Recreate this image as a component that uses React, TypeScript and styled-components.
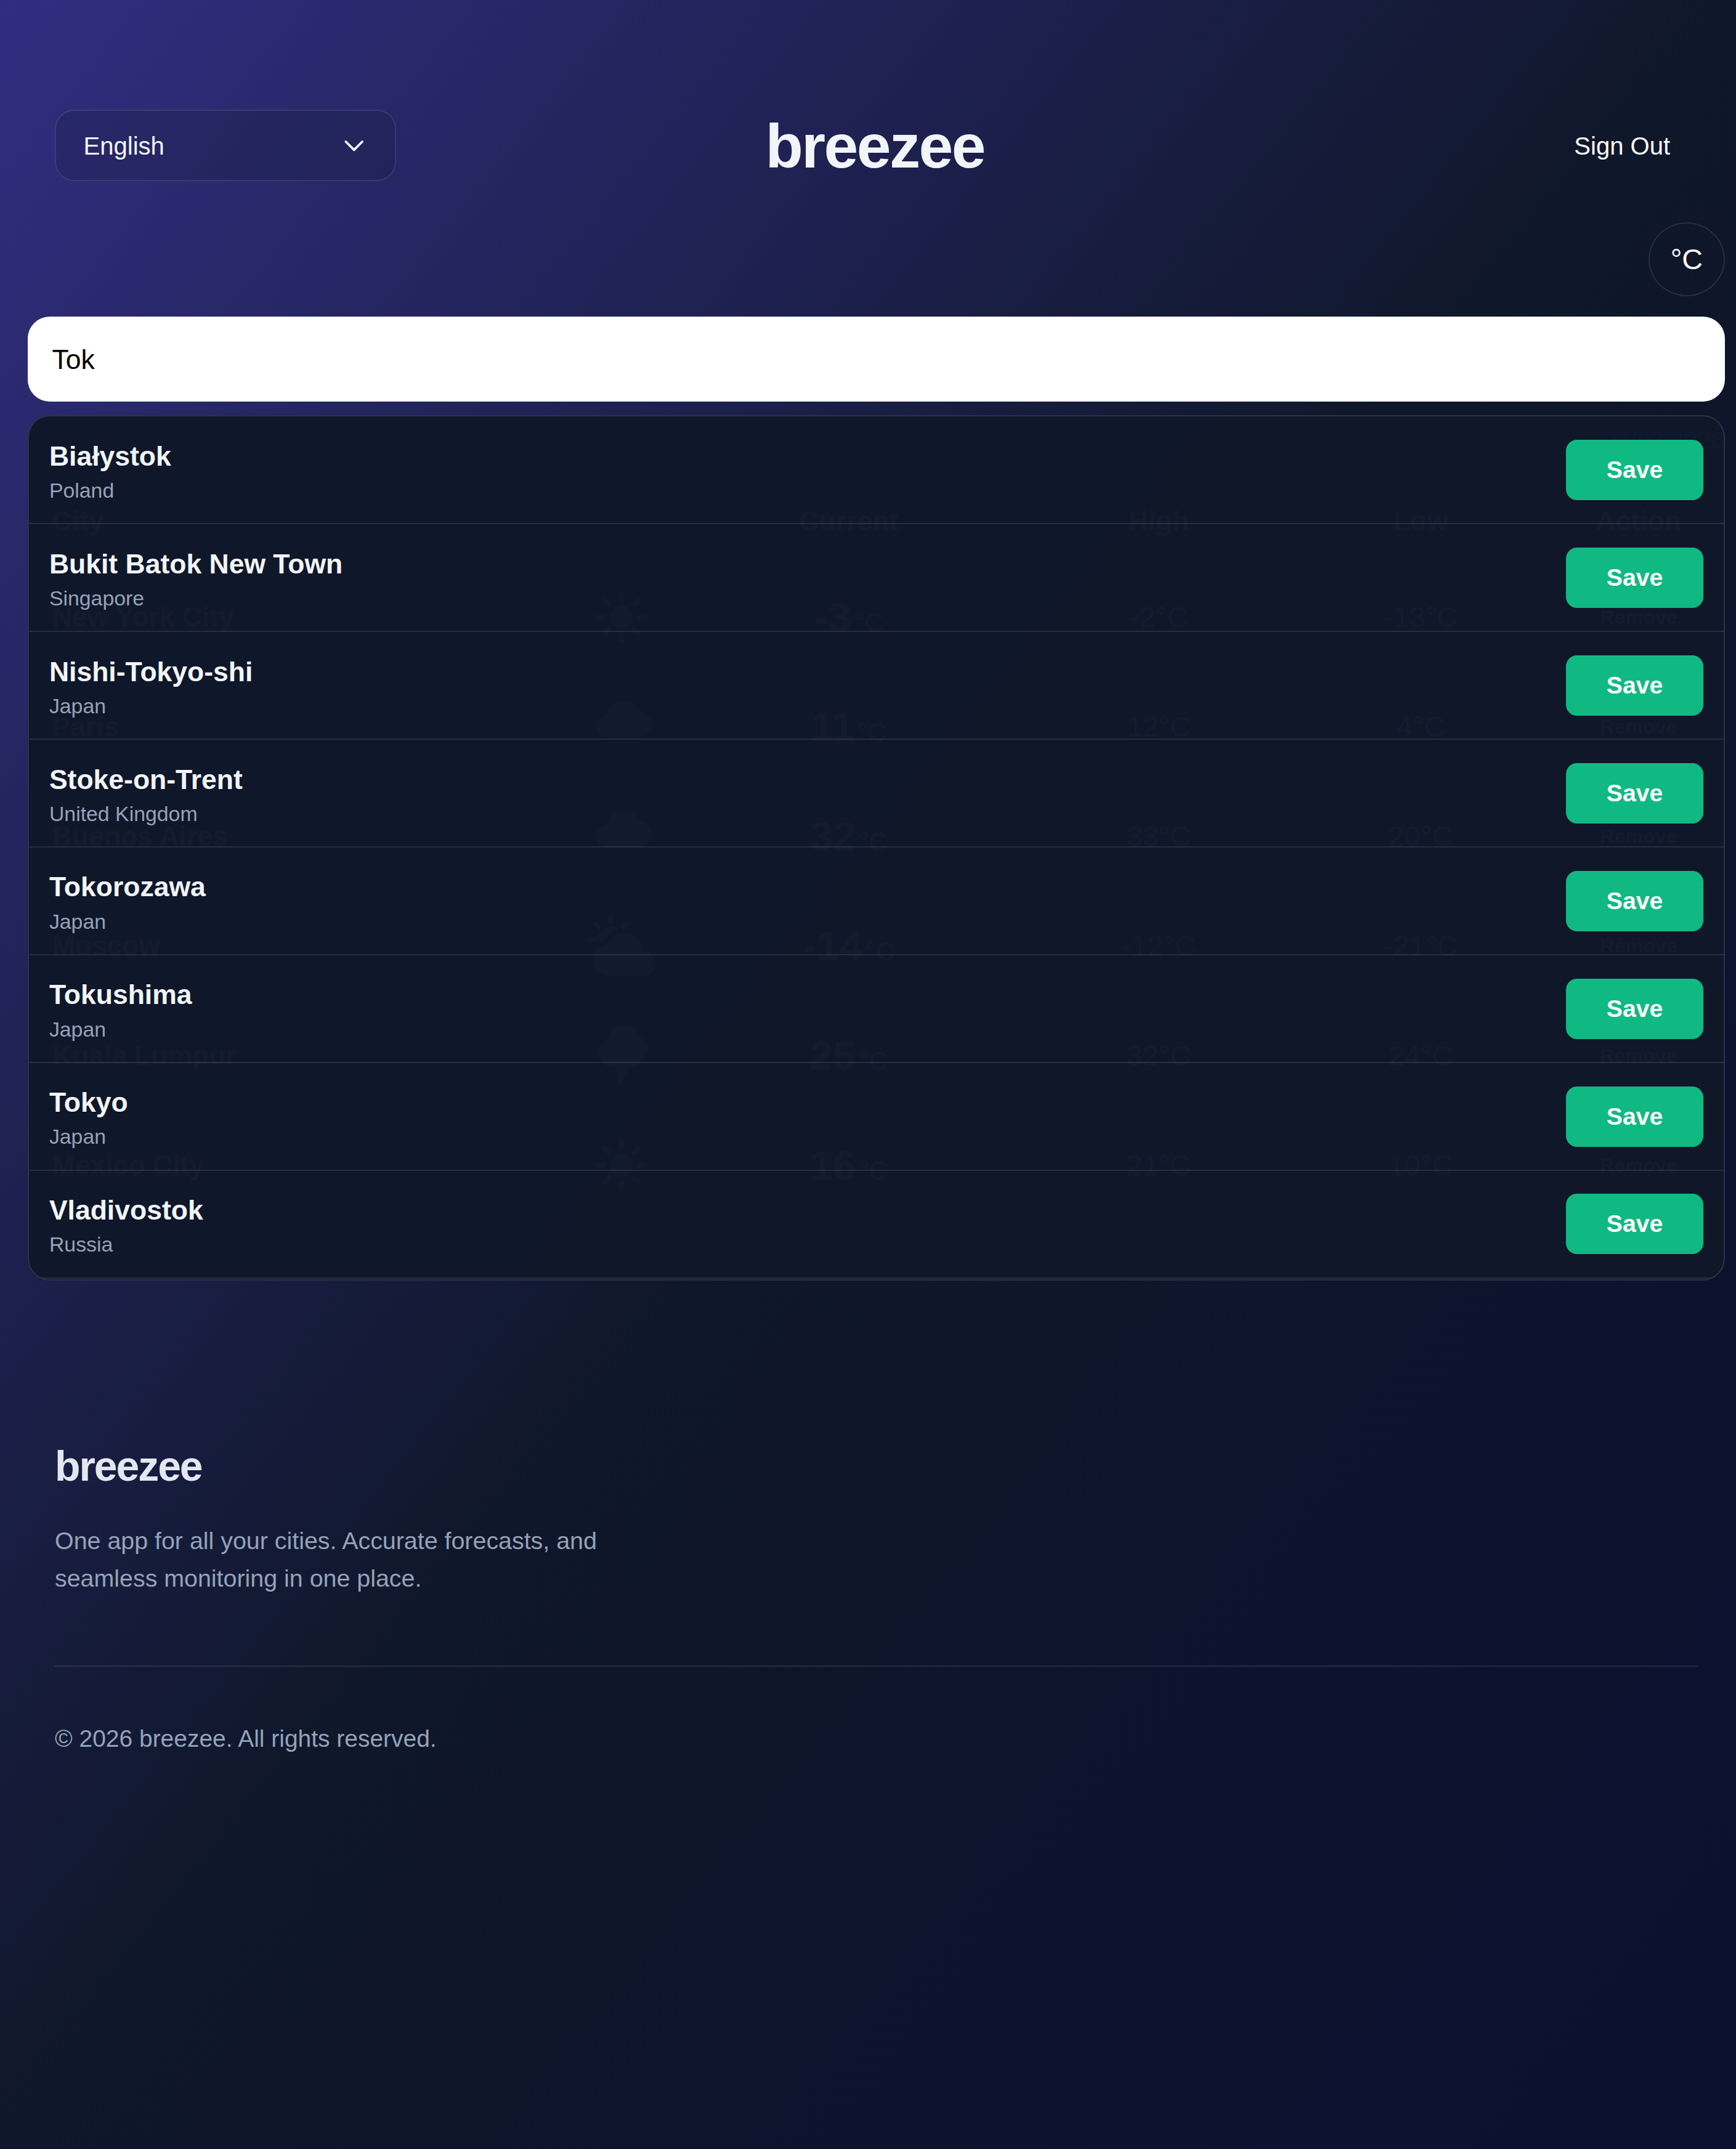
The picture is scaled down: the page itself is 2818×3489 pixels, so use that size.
import * as React from 'react';
import styled, { createGlobalStyle } from 'styled-components';
import { ChevronDown } from 'lucide-react';
import { IoCloudy, IoPartlySunny, IoSunny } from 'react-icons/io5';

const GlobalStyle = createGlobalStyle`
	html, body {
		margin: 0;
		padding: 0;
		overflow: hidden;
		background: #0c1029;
	}
	* {
		box-sizing: border-box;
	}
`;

// the page is laid out at its 1266px width and scaled up to the window
const Page = styled.div`
	zoom: ${2818 / 1266};
	width: 1266px;
	height: 1568px;
	overflow: hidden;
	font-family: 'Liberation Sans', Arial, sans-serif;
	color: #f1f5f9;
	background: linear-gradient(to bottom right, #312e81 0%, #0f172a 50%, #0b1030 100%);
`;

const Header = styled.header`
	display: grid;
	grid-template-columns: 1fr auto 1fr;
	align-items: center;
	padding: 80px 28px 0 40px;
`;

const LanguageSelect = styled.div`
	display: flex;
	align-items: center;
	justify-content: space-between;
	width: 249px;
	height: 52px;
	padding: 1px 18px 0 20px;
	border: 1px solid rgba(255, 255, 255, 0.1);
	border-radius: 14px;
	background: rgba(15, 23, 42, 0.2);
	font-size: 18px;
`;

const Logo = styled.h1`
	height: 52px;
	margin: 0 2px 0 0;
	padding-top: 1px;
	font-size: 45px;
	font-weight: 700;
	letter-spacing: -0.025em;
	line-height: 52px;
	color: #f1f5f9;
`;

const SignOut = styled.button`
	justify-self: end;
	padding: 1px 20px 0;
	border: 0;
	background: none;
	color: #f8fafc;
	font: inherit;
	font-size: 18px;
`;

const UnitRow = styled.div`
	display: flex;
	justify-content: flex-end;
	padding: 30px 8px 0 0;
`;

const UnitToggle = styled.button`
	width: 56px;
	height: 54px;
	border: 1px solid rgba(255, 255, 255, 0.1);
	border-radius: 50%;
	background: none;
	color: #f8fafc;
	font: inherit;
	font-size: 21px;
	padding: 0;
`;

const SearchSection = styled.section`
	padding: 15px 8px 0 20px;
`;

const SearchBox = styled.div`
	display: flex;
	align-items: center;
	height: 62px;
	padding: 1px 18px 0;
	border-radius: 16px;
	background: #fff;
	color: #000;
	font-size: 20px;
`;

const Results = styled.div`
	position: relative;
	height: 600px;
	margin-top: 10px;
`;

const SavedDate = styled.div`
	padding: 6px 1px 0 0;
	text-align: right;
	font-size: 17.5px;
	line-height: 24px;
	color: #94a3b8;
`;

const WeatherGrid = styled.div`
	display: grid;
	grid-template-columns: 398px 70px 262px 190px 192px 126px;
	margin-top: 17px;
	align-items: center;
`;

const Head = styled.div<{ $left?: boolean }>`
	height: 60px;
	line-height: 60px;
	padding-left: ${props => (props.$left ? '18px' : '0')};
	text-align: ${props => (props.$left ? 'left' : 'center')};
	font-size: 20px;
	font-weight: 700;
`;

const Cell = styled.div<{ $left?: boolean }>`
	display: flex;
	align-items: baseline;
	justify-content: ${props => (props.$left ? 'flex-start' : 'center')};
	padding-left: ${props => (props.$left ? '18px' : '0')};
	height: 80px;
	line-height: 80px;
`;

const CityName = styled(Cell)`
	font-size: 20px;
	font-weight: 700;
`;

const IconCell = styled(Cell)<{ $size: number; $lift: number; $flip?: boolean }>`
	align-items: center;
	font-size: ${props => props.$size}px;
	color: #cbd5e1;
	svg {
		margin-bottom: ${props => props.$lift}px;
		margin-left: ${props => (props.$lift ? '4px' : '0')};
		transform: ${props => (props.$flip ? 'scaleX(-1)' : 'none')};
	}
`;

const CurrentTemp = styled(Cell)`
	font-size: 30px;
	font-weight: 700;
	small {
		font-size: 19px;
		font-weight: 400;
		margin-left: 2px;
	}
`;

const RangeTemp = styled(Cell)`
	font-size: 21px;
`;

const RemoveLabel = styled(Cell)`
	font-size: 14.5px;
	font-weight: 700;
`;

const Dropdown = styled.div`
	position: absolute;
	top: 0;
	left: 0;
	right: 0;
	height: 631px;
	overflow: hidden;
	border: 1px solid rgba(255, 255, 255, 0.12);
	border-radius: 16px;
	background: rgba(15, 23, 42, 0.985);
`;

const ResultRow = styled.div`
	display: flex;
	align-items: center;
	justify-content: space-between;
	height: 78.6px;
	padding: 0 15px 0 15px;
	border-bottom: 1px solid rgba(255, 255, 255, 0.1);
	&:last-child {
		height: 78.4px;
	}
`;

const ResultName = styled.div`
	padding-top: 3px;
	font-size: 20px;
	font-weight: 700;
	line-height: 26px;
	color: #f1f5f9;
`;

const ResultCountry = styled.div`
	margin-top: 1px;
	font-size: 15.2px;
	line-height: 22px;
	color: #94a3b8;
`;

const SaveButton = styled.button`
	width: 100px;
	height: 44px;
	border: 0;
	border-radius: 8px;
	background: #10b981;
	color: #fff;
	font: inherit;
	font-size: 17.6px;
	font-weight: 700;
`;

const Footer = styled.footer`
	padding: 148px 28px 0 40px;
`;

const FooterLogo = styled.div`
	font-size: 30.5px;
	font-weight: 700;
	letter-spacing: -0.03em;
	line-height: 38px;
	color: #e2e8f0;
`;

const FooterText = styled.p`
	width: 420px;
	margin: 21px 0 0;
	font-size: 17.7px;
	line-height: 27.5px;
	color: #94a3b8;
`;

const FooterBottom = styled.div`
	margin-top: 50px;
	padding-top: 39px;
	border-top: 1px solid rgba(255, 255, 255, 0.1);
	font-size: 17.5px;
	line-height: 27px;
	color: #94a3b8;
`;

const StormIcon = () => (
	<svg width="1em" height="1em" viewBox="0 0 44 56" fill="currentColor">
		<circle cx="14" cy="26" r="11" />
		<circle cx="24" cy="16" r="13" />
		<circle cx="35" cy="22" r="9" />
		<rect x="8" y="22" width="30" height="15" rx="7" />
		<path d="M18 36h11l-9 18z" />
	</svg>
);

const saved = [
	{ city: 'New York City', icon: <IoSunny />, size: 42, lift: 0, current: '-3', high: '-2', low: '-13' },
	{ city: 'Paris', icon: <IoCloudy />, size: 40, lift: 11, current: '11', high: '12', low: '4' },
	{ city: 'Buenos Aires', icon: <IoCloudy />, size: 40, lift: 11, current: '32', high: '33', low: '20' },
	{ city: 'Moscow', icon: <IoPartlySunny />, size: 50, lift: 0, flip: true, current: '-14', high: '-12', low: '-21' },
	{ city: 'Kuala Lumpur', icon: <StormIcon />, size: 50, lift: 0, current: '25', high: '32', low: '24' },
	{ city: 'Mexico City', icon: <IoSunny />, size: 42, lift: 0, current: '16', high: '21', low: '10' }
];

const matches = [
	['Białystok', 'Poland'],
	['Bukit Batok New Town', 'Singapore'],
	['Nishi-Tokyo-shi', 'Japan'],
	['Stoke-on-Trent', 'United Kingdom'],
	['Tokorozawa', 'Japan'],
	['Tokushima', 'Japan'],
	['Tokyo', 'Japan'],
	['Vladivostok', 'Russia']
];

export default function App() {
	return (
		<Page>
			<GlobalStyle />
			<Header>
				<LanguageSelect>
					English
					<ChevronDown size={24} strokeWidth={1.7} />
				</LanguageSelect>
				<Logo>breezee</Logo>
				<SignOut>Sign Out</SignOut>
			</Header>
			<UnitRow>
				<UnitToggle>°C</UnitToggle>
			</UnitRow>
			<SearchSection>
				<SearchBox>Tok</SearchBox>
				<Results>
					<SavedDate>04/02/2026</SavedDate>
					<WeatherGrid>
						<Head $left>City</Head>
						<Head />
						<Head>Current</Head>
						<Head>High</Head>
						<Head>Low</Head>
						<Head>Action</Head>
						{saved.map(row => (
							<React.Fragment key={row.city}>
								<CityName $left>{row.city}</CityName>
								<IconCell $size={row.size} $lift={row.lift} $flip={row.flip}>
									{row.icon}
								</IconCell>
								<CurrentTemp>
									{row.current}
									<small>°C</small>
								</CurrentTemp>
								<RangeTemp>{row.high}°C</RangeTemp>
								<RangeTemp>{row.low}°C</RangeTemp>
								<RemoveLabel>Remove</RemoveLabel>
							</React.Fragment>
						))}
					</WeatherGrid>
					<Dropdown>
						{matches.map(([name, country]) => (
							<ResultRow key={name}>
								<div>
									<ResultName>{name}</ResultName>
									<ResultCountry>{country}</ResultCountry>
								</div>
								<SaveButton>Save</SaveButton>
							</ResultRow>
						))}
					</Dropdown>
				</Results>
			</SearchSection>
			<Footer>
				<FooterLogo>breezee</FooterLogo>
				<FooterText>
					One app for all your cities. Accurate forecasts, and seamless monitoring in one place.
				</FooterText>
				<FooterBottom>© 2026 breezee. All rights reserved.</FooterBottom>
			</Footer>
		</Page>
	);
}
